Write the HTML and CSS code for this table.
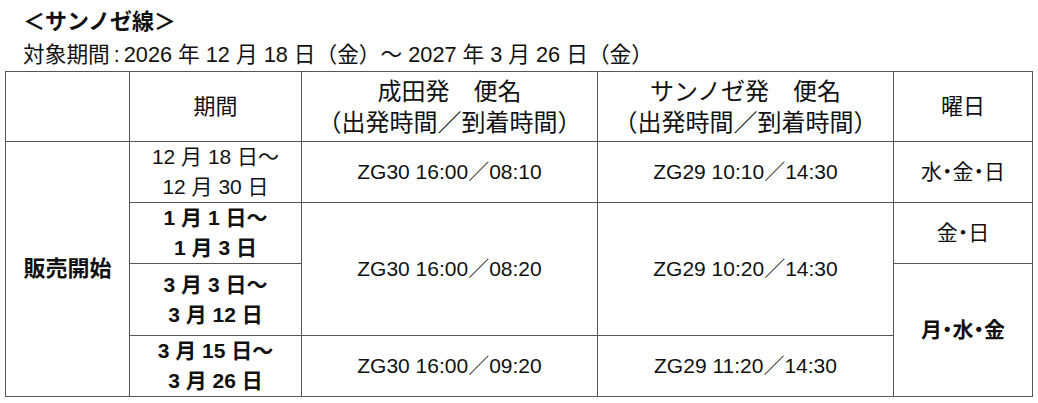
FILE: index.html
```html
<!DOCTYPE html>
<html lang="ja">
<head>
<meta charset="utf-8">
<title>サンノゼ線</title>
<link rel="stylesheet" href="styles.css">
</head>
<body>
<div class="page">
  <h1 class="title">＜サンノゼ線＞</h1>
  <p class="period">対象期間<span class="colon">:</span>2026 年 12 月 18 日（金）～ 2027 年 3 月 26 日（金）</p>
  <table class="schedule">
    <colgroup>
      <col class="c1"><col class="c2"><col class="c3"><col class="c4"><col class="c5">
    </colgroup>
    <thead>
      <tr class="r-head">
        <th></th>
        <th class="h-small">期間</th>
        <th class="h-big">成田発　便名<br>（出発時間／到着時間）</th>
        <th class="h-big">サンノゼ発　便名<br>（出発時間／到着時間）</th>
        <th class="h-small">曜日</th>
      </tr>
    </thead>
    <tbody>
      <tr class="r1">
        <td rowspan="4" class="sale">販売開始</td>
        <td class="date">12 月 18 日～<br>12 月 30 日</td>
        <td>ZG30 16:00／08:10</td>
        <td>ZG29 10:10／14:30</td>
        <td class="days">水・金・日</td>
      </tr>
      <tr class="r2">
        <td class="date bold">1 月 1 日～<br>1 月 3 日</td>
        <td rowspan="2">ZG30 16:00／08:20</td>
        <td rowspan="2">ZG29 10:20／14:30</td>
        <td class="days">金・日</td>
      </tr>
      <tr class="r3">
        <td class="date bold">3 月 3 日～<br>3 月 12 日</td>
        <td rowspan="2" class="days bold">月・水・金</td>
      </tr>
      <tr class="r4">
        <td class="date bold">3 月 15 日～<br>3 月 26 日</td>
        <td>ZG30 16:00／09:20</td>
        <td>ZG29 11:20／14:30</td>
      </tr>
    </tbody>
  </table>
</div>
</body>
</html>
```

FILE: styles.css
```css
html, body {
  margin: 0;
  padding: 0;
  background: #fff;
}

body {
  font-family: "Liberation Sans", "Noto Sans CJK JP", sans-serif;
  color: #111;
}

.page {
  padding: 6px 0 0 5px;
}

.title {
  margin: 0 0 0 18px;
  font-size: 22px;
  font-weight: bold;
  line-height: 32px;
  height: 32px;
}

.period {
  margin: 0 0 0 18px;
  font-size: 21.7px;
  line-height: 33px;
  height: 33px;
}

.colon {
  margin: 0 4px;
}

.schedule {
  border-collapse: collapse;
  table-layout: fixed;
  width: 1027px;
}

.schedule th,
.schedule td {
  border: 1px solid #555;
  padding: 0;
  text-align: center;
  vertical-align: middle;
  font-weight: normal;
  font-size: 21px;
  line-height: 30px;
}

.c1 { width: 124px; }
.c2 { width: 172px; }
.c3 { width: 296px; }
.c4 { width: 296px; }
.c5 { width: 139px; }

.r-head { height: 70px; }
.r1 { height: 61px; }
.r2 { height: 61px; }
.r3 { height: 72px; }
.r4 { height: 60px; }

.schedule .h-small {
  font-size: 22px;
}

.schedule .h-big {
  font-size: 24px;
  line-height: 31px;
}

.schedule .sale {
  font-size: 22px;
  font-weight: bold;
}

.schedule .days {
  font-feature-settings: "halt";
}

.schedule .bold {
  font-weight: bold;
}
```
